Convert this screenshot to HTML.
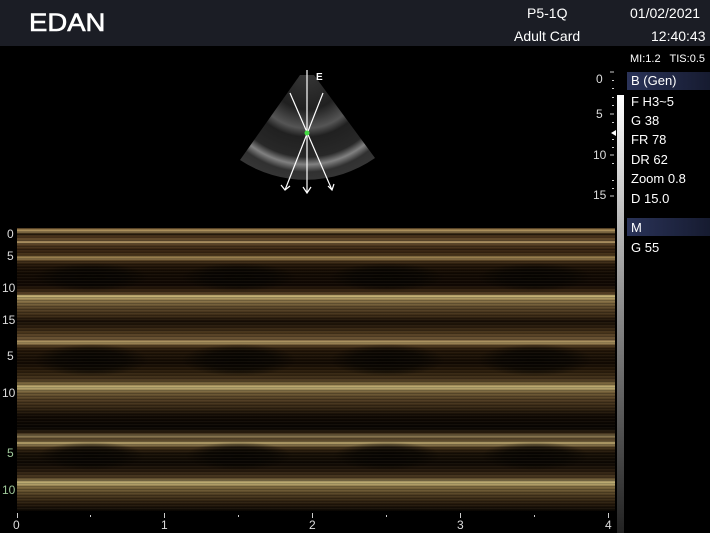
<!DOCTYPE html>
<html><head><meta charset="utf-8"><style>
body{margin:0;width:710px;height:533px;background:#000;position:relative;overflow:hidden;font-family:"Liberation Sans",sans-serif;color:#fff}
.a{position:absolute;white-space:nowrap}
#hdr{left:0;top:0;width:710px;height:46px;background:#1b1d25}
#m{left:17px;top:228px;width:598px;height:283px;
background:
linear-gradient(to bottom,
#5e4526 0px,#b89c64 3px,#24180a 6px,#4e361c 9px,#6e5634 13px,#c0a470 14px,#553e22 16px,#321f0e 22px,#463218 27px,#a88e58 30px,#46321a 33px,#221508 37px,#120a03 45px,#100803 57px,#301f0e 62px,#574024 66px,#cbb87a 68px,#8e784a 72px,#564226 80px,#3a2914 88px,#170e05 93px,#26190b 98px,#4a361c 105px,#705838 112px,#bca46c 114px,#4a351c 118px,#231608 122px,#120a03 135px,#261909 142px,#48361e 152px,#8e7a4a 157px,#c8b87c 159px,#705c36 164px,#4c3920 172px,#322412 180px,#100903 188px,#080502 200px,#302210 205px,#887650 208px,#4a381e 212px,#b4a06a 215px,#3e2c16 220px,#181006 225px,#0e0803 235px,#26190c 243px,#4e3b22 250px,#c6b67a 255px,#7a663c 259px,#46351c 268px,#24180b 276px,#0b0703 283px)}
#m2{left:17px;top:228px;width:598px;height:283px;background:repeating-linear-gradient(to bottom,rgba(0,0,0,.2) 0 1px,rgba(255,230,180,.04) 1px 2px,rgba(0,0,0,0) 2px 3px)}
.cav{position:absolute;left:17px;width:598px;background-repeat:repeat-x;background-size:148px 100%}
.lt{font-size:12px;color:#ddd}
.g{color:#9fc89a}
.p{font-size:13px;left:631px}
.hl{left:627px;width:83px;height:18px;background:linear-gradient(90deg,#2a3358,#161b30)}
</style></head><body>
<div class="a" id="hdr"></div>
<div class="a" style="left:29px;top:9px;font-size:25px;transform:scaleX(1.1);transform-origin:left;-webkit-text-stroke:0.6px #fff">EDAN</div>
<div class="a" style="left:527px;top:5px;font-size:14px">P5-1Q</div>
<div class="a" style="left:514px;top:28px;font-size:14px">Adult Card</div>
<div class="a" style="left:630px;top:5px;font-size:14px">01/02/2021</div>
<div class="a" style="left:651px;top:28px;font-size:14px">12:40:43</div>
<div class="a" style="left:630px;top:53px;font-size:11px">MI:1.2&nbsp;&nbsp; TIS:0.5</div>

<svg class="a" style="left:0;top:0" width="710" height="533">
<defs><radialGradient id="sg" cx="307" cy="72" r="125" gradientUnits="userSpaceOnUse">
<stop offset="0" stop-color="#3a3a3a"/><stop offset=".3" stop-color="#222"/><stop offset=".45" stop-color="#5a5a5a"/><stop offset=".52" stop-color="#222"/><stop offset=".68" stop-color="#2a2a2a"/><stop offset=".74" stop-color="#888"/><stop offset=".8" stop-color="#333"/><stop offset=".9" stop-color="#3a3a3a"/><stop offset="1" stop-color="#0a0a0a"/></radialGradient>
<linearGradient id="bar" x1="0" y1="0" x2="0" y2="1"><stop offset="0" stop-color="#fff"/><stop offset=".5" stop-color="#888"/><stop offset="1" stop-color="#222"/></linearGradient></defs>
<path d="M300,75 L314,75 L375,158 A120,120 0 0 1 240,160 Z" fill="url(#sg)" opacity=".95"/>
<g stroke="#fff" stroke-width="1.2" fill="none">
<line x1="307" y1="70" x2="307" y2="192"/>
<line x1="290" y1="93" x2="332" y2="190"/>
<line x1="323" y1="93" x2="285" y2="190"/>
<path d="M303,187 L307,193 L311,187 M281,185 L285,190 L290,186 M328,186 L332,190 L334,184"/>
</g>
<circle cx="307" cy="133" r="2.5" fill="#4d4"/>
<text x="316" y="80" fill="#fff" font-size="10" font-weight="bold" font-family="Liberation Sans">E</text>
<rect x="617" y="95" width="7" height="438" fill="url(#bar)"/>
<g stroke="#ccc" stroke-width="1">
<line x1="610" y1="72" x2="614" y2="72"/><line x1="610" y1="114" x2="614" y2="114"/><line x1="610" y1="155" x2="614" y2="155"/><line x1="610" y1="196" x2="614" y2="196"/>
</g>
<g fill="#ccc"><rect x="612" y="80" width="2" height="1"/><rect x="612" y="88" width="2" height="1"/><rect x="612" y="97" width="2" height="1"/><rect x="612" y="105" width="2" height="1"/><rect x="612" y="122" width="2" height="1"/><rect x="612" y="139" width="2" height="1"/><rect x="612" y="147" width="2" height="1"/><rect x="612" y="163" width="2" height="1"/><rect x="612" y="180" width="2" height="1"/><rect x="612" y="188" width="2" height="1"/></g>
<path d="M611,133 L616,130 L616,136 Z" fill="#fff"/>
<g fill="#ccc"><rect x="17" y="513" width="1" height="5"/><rect x="164" y="513" width="1" height="5"/><rect x="312" y="513" width="1" height="5"/><rect x="460" y="513" width="1" height="5"/><rect x="608" y="513" width="1" height="5"/><rect x="90" y="515" width="1" height="2"/><rect x="238" y="515" width="1" height="2"/><rect x="386" y="515" width="1" height="2"/><rect x="534" y="515" width="1" height="2"/></g>
</svg>
<div class="a lt" style="left:596px;top:72px">0</div>
<div class="a lt" style="left:596px;top:107px">5</div>
<div class="a lt" style="left:593px;top:148px">10</div>
<div class="a lt" style="left:593px;top:188px">15</div>

<div class="a hl" style="top:72px"></div>
<div class="a p" style="top:73px">B (Gen)</div>
<div class="a p" style="top:94px">F H3~5</div>
<div class="a p" style="top:113px">G 38</div>
<div class="a p" style="top:132px">FR 78</div>
<div class="a p" style="top:152px">DR 62</div>
<div class="a p" style="top:171px">Zoom 0.8</div>
<div class="a p" style="top:191px">D 15.0</div>
<div class="a hl" style="top:218px"></div>
<div class="a p" style="top:220px">M</div>
<div class="a p" style="top:240px">G 55</div>

<div class="a" id="m"></div>
<div class="cav" style="top:262px;height:30px;background-image:radial-gradient(ellipse 58px 14px at 74px 15px,rgba(6,4,1,.95),rgba(6,4,1,.7) 60%,rgba(0,0,0,0))"></div>
<div class="cav" style="top:340px;height:36px;background-image:radial-gradient(ellipse 58px 16px at 74px 20px,rgba(6,4,1,.95),rgba(6,4,1,.7) 60%,rgba(0,0,0,0))"></div>
<div class="cav" style="top:440px;height:32px;background-image:radial-gradient(ellipse 54px 14px at 74px 16px,rgba(6,4,1,.95),rgba(6,4,1,.7) 60%,rgba(0,0,0,0))"></div>
<div class="a" id="m2"></div>

<div class="a lt" style="left:7px;top:227px">0</div>
<div class="a lt" style="left:7px;top:249px">5</div>
<div class="a lt" style="left:2px;top:281px">10</div>
<div class="a lt" style="left:2px;top:313px">15</div>
<div class="a lt" style="left:7px;top:349px">5</div>
<div class="a lt" style="left:2px;top:386px">10</div>
<div class="a lt g" style="left:7px;top:446px">5</div>
<div class="a lt g" style="left:2px;top:483px">10</div>
<div class="a lt" style="left:13px;top:518px">0</div>
<div class="a lt" style="left:161px;top:518px">1</div>
<div class="a lt" style="left:309px;top:518px">2</div>
<div class="a lt" style="left:457px;top:518px">3</div>
<div class="a lt" style="left:605px;top:518px">4</div>
</body></html>
